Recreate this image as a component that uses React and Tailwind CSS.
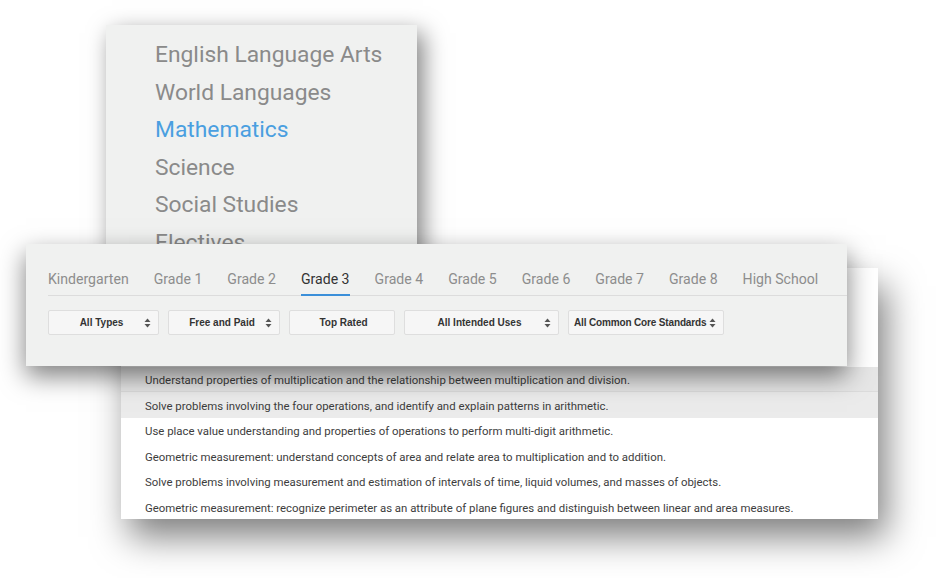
import React from "react";

const subjects = [
  { label: "English Language Arts" },
  { label: "World Languages" },
  { label: "Mathematics", active: true },
  { label: "Science" },
  { label: "Social Studies" },
  { label: "Electives" },
];

const grades = [
  "Kindergarten",
  "Grade 1",
  "Grade 2",
  "Grade 3",
  "Grade 4",
  "Grade 5",
  "Grade 6",
  "Grade 7",
  "Grade 8",
  "High School",
];

const filters = [
  { label: "All Types", width: "w-[111px]", arrow: true },
  { label: "Free and Paid", width: "w-[112px]", arrow: true },
  { label: "Top Rated", width: "w-[106px]", arrow: false },
  { label: "All Intended Uses", width: "w-[155px]", arrow: true },
  { label: "All Common Core Standards", width: "w-[156px]", arrow: true, tight: true },
];

const standards = [
  "Understand properties of multiplication and the relationship between multiplication and division.",
  "Solve problems involving the four operations, and identify and explain patterns in arithmetic.",
  "Use place value understanding and properties of operations to perform multi-digit arithmetic.",
  "Geometric measurement: understand concepts of area and relate area to multiplication and to addition.",
  "Solve problems involving measurement and estimation of intervals of time, liquid volumes, and masses of objects.",
  "Geometric measurement: recognize perimeter as an attribute of plane figures and distinguish between linear and area measures.",
];

function UpDown() {
  return (
    <svg width="7" height="10" viewBox="0 0 7 10" className="shrink-0">
      <path d="M3.5 0.5 L6.5 4 L0.5 4 Z" fill="#555" />
      <path d="M3.5 9.5 L6.5 6 L0.5 6 Z" fill="#555" />
    </svg>
  );
}

export default function App() {
  return (
    <div className="relative w-[936px] h-[578px] overflow-hidden bg-white">
      {/* subject menu */}
      <div className="absolute left-[106px] top-[25px] w-[311px] h-[290px] bg-[#f0f1f0] shadow-[6px_8px_22px_rgba(0,0,0,0.5)] pl-[49px] pt-[11px] font-['Roboto',sans-serif]">
        {subjects.map((s) => (
          <div
            key={s.label}
            className={`text-[22.8px] leading-[37.5px] ${s.active ? "text-[#4a9fe0]" : "text-[#8a8a8a]"}`}
          >
            {s.label}
          </div>
        ))}
      </div>

      {/* standards list */}
      <div className="absolute left-[121px] top-[268px] w-[757px] h-[251px] bg-white shadow-[8px_18px_34px_rgba(0,0,0,0.5)] pt-[99px] font-['Roboto',sans-serif]">
        {standards.map((t, i) => (
          <div
            key={t}
            className={`h-[25.4px] flex items-center pl-[24px] pt-[3px] text-[11.4px] text-[#3d3d3d] whitespace-nowrap ${
              i === 0 ? "bg-[#e6e6e6] border-b border-[#dcdcdc]" : i === 1 ? "bg-[#ebebeb]" : ""
            }`}
          >
            {t}
          </div>
        ))}
      </div>

      {/* grade tabs + filters */}
      <div className="absolute left-[26px] top-[244px] w-[821px] h-[122px] bg-[#f0f1f0] shadow-[0_10px_24px_rgba(0,0,0,0.5)] pl-[22px] pt-[25px]">
        <div className="flex gap-[25px] border-b border-[#dcdcdc] font-['Roboto',sans-serif]">
          {grades.map((g) => (
            <div
              key={g}
              className={`text-[14.1px] leading-[20px] pb-[5px] -mb-px border-b-2 ${
                g === "Grade 3"
                  ? "text-[#333] border-[#3b8fd9]"
                  : "text-[#8d8d8d] border-transparent"
              }`}
            >
              {g}
            </div>
          ))}
        </div>
        <div className="flex gap-[9px] mt-[14px] font-['Liberation_Sans',sans-serif]">
          {filters.map((f) => (
            <div
              key={f.label}
              className={`${f.width} h-[25px] flex items-center bg-[#f6f6f6] border border-[#dedede] rounded-[2px] ${f.tight ? "pl-[5px] pr-[5px]" : "pl-[10px] pr-[7px]"}`}
            >
              <span
                className={`text-[10px] font-bold text-[#333] whitespace-nowrap ${
                  f.tight ? "tracking-[-0.15px]" : "flex-1 text-center"
                }`}
              >
                {f.label}
              </span>
              {f.arrow && (
                <span className={f.tight ? "ml-[3px]" : ""}>
                  <UpDown />
                </span>
              )}
            </div>
          ))}
        </div>
      </div>
    </div>
  );
}
